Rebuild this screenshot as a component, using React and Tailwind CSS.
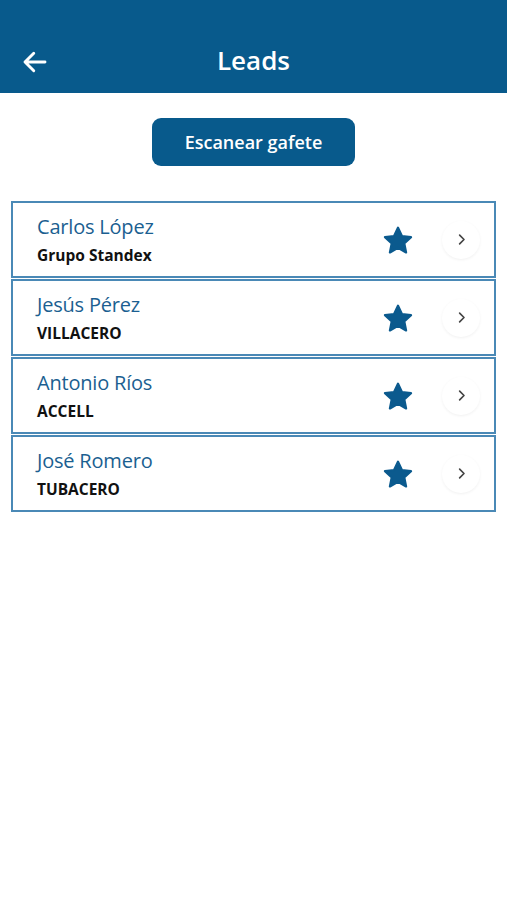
import React from 'react';

const leads = [
  { id: 1, name: 'Carlos López', company: 'Grupo Standex' },
  { id: 2, name: 'Jesús Pérez', company: 'VILLACERO' },
  { id: 3, name: 'Antonio Ríos', company: 'ACCELL' },
  { id: 4, name: 'José Romero', company: 'TUBACERO' },
];

const Star = () => (
  <svg width="34" height="34" viewBox="0 0 24 24" fill="#0b5a8e">
    <path
      d="M12 2.6l2.75 5.9 6.45.75-4.8 4.4 1.3 6.4L12 16.85 6.3 20.05l1.3-6.4-4.8-4.4 6.45-.75z"
      stroke="#0b5a8e"
      strokeWidth="1.6"
      strokeLinejoin="round"
    />
  </svg>
);

const Chevron = () => (
  <svg width="15" height="15" viewBox="0 0 24 24" fill="none" stroke="#444" strokeWidth="2.6" strokeLinecap="round" strokeLinejoin="round">
    <path d="M9 5l7 7-7 7" />
  </svg>
);

const LeadRow = ({ lead }) => (
  <div className="flex items-center h-[77px] border-2 border-[#4a89b6] bg-white pl-[24px] pr-[14px]">
    <div className="flex-1 flex flex-col">
      <span className="text-[20px] leading-[26px] text-[#1b5f91] tracking-[-0.2px]">{lead.name}</span>
      <span className="text-[15.5px] leading-[22px] font-bold text-[#111] mt-[4px]">{lead.company}</span>
    </div>
    <div className="mr-[27px] mt-[2px]">
      <Star />
    </div>
    <div className="w-[38px] h-[38px] rounded-full bg-white shadow-[0_1px_3px_rgba(0,0,0,0.06)] flex items-center justify-center">
      <Chevron />
    </div>
  </div>
);

export default function App() {
  return (
    <div className="min-h-screen bg-white" style={{ fontFamily: '"Open Sans", Lato, sans-serif' }}>
      <header className="h-[93px] bg-[#085a8c] flex items-end pb-[16px] px-[20px] relative">
        <button className="text-white">
          <svg width="30" height="30" viewBox="0 0 24 24" fill="none" stroke="white" strokeWidth="2.3" strokeLinecap="round" strokeLinejoin="round">
            <path d="M20 12H4M11 5l-7 7 7 7" />
          </svg>
        </button>
        <h1 className="absolute left-0 right-0 bottom-[17px] text-center text-white text-[26px] leading-[32px] font-semibold pointer-events-none">
          Leads
        </h1>
      </header>

      <div className="flex justify-center mt-[25px]">
        <button className="w-[203px] h-[48px] rounded-[9px] bg-[#085a8c] text-white text-[18px] font-semibold">
          Escanear gafete
        </button>
      </div>

      <div className="mx-[11px] mt-[35px] flex flex-col gap-[1px]">
        {leads.map((lead) => (
          <LeadRow key={lead.id} lead={lead} />
        ))}
      </div>
    </div>
  );
}
